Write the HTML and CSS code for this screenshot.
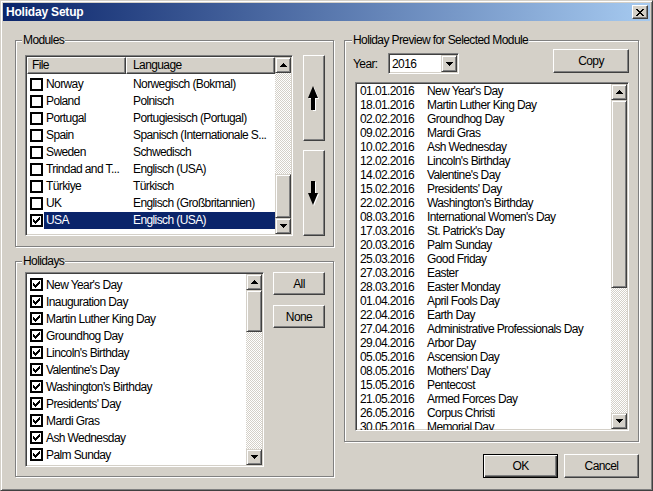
FILE: index.html
```html
<!DOCTYPE html>
<html lang="en">
<head>
    <meta charset="UTF-8">
    <title>Holiday Setup</title>
    <link rel="stylesheet" href="styles.css">
</head>
<body>
<svg class="svg-defs" xmlns="http://www.w3.org/2000/svg">
    <symbol id="chk-off" viewBox="0 0 13 13">
        <rect x="1" y="1" width="11" height="11" fill="#fff" stroke="#000" stroke-width="2"/>
    </symbol>
    <symbol id="chk-on" viewBox="0 0 13 13">
        <rect x="1" y="1" width="11" height="11" fill="#fff" stroke="#000" stroke-width="2"/>
        <path d="M3 5h1v3H3z M4 6h1v3H4z M5 7h1v3H5z M6 6h1v3H6z M7 5h1v3H7z M8 4h1v3H8z M9 3h1v3H9z" fill="#000"/>
    </symbol>
    <symbol id="tri-up" viewBox="0 0 7 4">
        <path d="M3 0h1v1H3z M2 1h3v1H2z M1 2h5v1H1z M0 3h7v1H0z" fill="#000"/>
    </symbol>
    <symbol id="tri-down" viewBox="0 0 7 4">
        <path d="M0 0h7v1H0z M1 1h5v1H1z M2 2h3v1H2z M3 3h1v1H3z" fill="#000"/>
    </symbol>
    <symbol id="big-up" viewBox="0 0 12 25">
        <polygon points="6,1 11,13 8,13 8,25 5,25 5,13 1,13" fill="#fff"/>
        <polygon points="5,0 10,12 7,12 7,24 3,24 3,12 0,12" fill="#000"/>
    </symbol>
    <symbol id="big-down" viewBox="0 0 12 25">
        <polygon points="6,25 11,13 8,13 8,1 5,1 5,13 1,13" fill="#fff"/>
        <polygon points="5,24 10,12 7,12 7,0 3,0 3,12 0,12" fill="#000"/>
    </symbol>
    <symbol id="close-x" viewBox="0 0 8 7">
        <path d="M0 0h2v1H0z M6 0h2v1H6z M1 1h2v1H1z M5 1h2v1H5z M2 2h4v1H2z M3 3h2v1H3z M2 4h4v1H2z M1 5h2v1H1z M5 5h2v1H5z M0 6h2v1H0z M6 6h2v1H6z" fill="#000"/>
    </symbol>
</svg>

<div class="window">
    <div class="caption">
        <span class="caption-text">Holiday Setup</span>
        <div class="close-btn"><svg width="8" height="7"><use href="#close-x"/></svg></div>
    </div>

    <div class="client">
        <div class="col-left">
            <!-- Modules -->
            <div class="group modules">
                <div class="group-title">Modules</div>
                <div class="modules-body">
                    <div class="sunken modules-list">
                        <div class="lv-main">
                            <div class="lv-header">
                                <div class="hd hd-file">File</div>
                                <div class="hd hd-lang">Language</div>
                            </div>
                            <div class="lv-rows">
                                <div class="lv-row"><svg class="chk"><use href="#chk-off"/></svg><span class="c-file">Norway</span><span class="c-lang">Norwegisch (Bokmal)</span></div>
                                <div class="lv-row"><svg class="chk"><use href="#chk-off"/></svg><span class="c-file">Poland</span><span class="c-lang">Polnisch</span></div>
                                <div class="lv-row"><svg class="chk"><use href="#chk-off"/></svg><span class="c-file">Portugal</span><span class="c-lang">Portugiesisch (Portugal)</span></div>
                                <div class="lv-row"><svg class="chk"><use href="#chk-off"/></svg><span class="c-file">Spain</span><span class="c-lang">Spanisch (Internationale S...</span></div>
                                <div class="lv-row"><svg class="chk"><use href="#chk-off"/></svg><span class="c-file">Sweden</span><span class="c-lang">Schwedisch</span></div>
                                <div class="lv-row"><svg class="chk"><use href="#chk-off"/></svg><span class="c-file">Trindad and T...</span><span class="c-lang">Englisch (USA)</span></div>
                                <div class="lv-row"><svg class="chk"><use href="#chk-off"/></svg><span class="c-file">Türkiye</span><span class="c-lang">Türkisch</span></div>
                                <div class="lv-row"><svg class="chk"><use href="#chk-off"/></svg><span class="c-file">UK</span><span class="c-lang">Englisch (Großbritannien)</span></div>
                                <div class="lv-row selected"><svg class="chk"><use href="#chk-on"/></svg><span class="c-file">USA</span><span class="c-lang">Englisch (USA)</span></div>
                            </div>
                        </div>
                        <div class="scrollbar">
                            <div class="sb-btn"><svg width="7" height="4"><use href="#tri-up"/></svg></div>
                            <div class="sb-track"></div>
                            <div class="sb-thumb modules-thumb"></div>
                            <div class="sb-btn"><svg width="7" height="4"><use href="#tri-down"/></svg></div>
                        </div>
                    </div>
                    <div class="move-btns">
                        <div class="btn big"><svg width="12" height="25"><use href="#big-up"/></svg></div>
                        <div class="btn big"><svg width="12" height="25"><use href="#big-down"/></svg></div>
                    </div>
                </div>
            </div>

            <!-- Holidays -->
            <div class="group holidays">
                <div class="group-title">Holidays</div>
                <div class="holidays-body">
                    <div class="sunken holidays-list">
                        <div class="hl-rows">
                            <div class="hl-row"><svg class="chk"><use href="#chk-on"/></svg><span>New Year's Day</span></div>
                            <div class="hl-row"><svg class="chk"><use href="#chk-on"/></svg><span>Inauguration Day</span></div>
                            <div class="hl-row"><svg class="chk"><use href="#chk-on"/></svg><span>Martin Luther King Day</span></div>
                            <div class="hl-row"><svg class="chk"><use href="#chk-on"/></svg><span>Groundhog Day</span></div>
                            <div class="hl-row"><svg class="chk"><use href="#chk-on"/></svg><span>Lincoln's Birthday</span></div>
                            <div class="hl-row"><svg class="chk"><use href="#chk-on"/></svg><span>Valentine's Day</span></div>
                            <div class="hl-row"><svg class="chk"><use href="#chk-on"/></svg><span>Washington's Birthday</span></div>
                            <div class="hl-row"><svg class="chk"><use href="#chk-on"/></svg><span>Presidents' Day</span></div>
                            <div class="hl-row"><svg class="chk"><use href="#chk-on"/></svg><span>Mardi Gras</span></div>
                            <div class="hl-row"><svg class="chk"><use href="#chk-on"/></svg><span>Ash Wednesday</span></div>
                            <div class="hl-row"><svg class="chk"><use href="#chk-on"/></svg><span>Palm Sunday</span></div>
                        </div>
                        <div class="scrollbar">
                            <div class="sb-btn"><svg width="7" height="4"><use href="#tri-up"/></svg></div>
                            <div class="sb-thumb holidays-thumb"></div>
                            <div class="sb-track"></div>
                            <div class="sb-btn"><svg width="7" height="4"><use href="#tri-down"/></svg></div>
                        </div>
                    </div>
                    <div class="select-btns">
                        <div class="btn push">All</div>
                        <div class="btn push">None</div>
                    </div>
                </div>
            </div>
        </div>

        <div class="col-right">
            <!-- Preview -->
            <div class="group preview">
                <div class="group-title">Holiday Preview for Selected Module</div>
                <div class="preview-top">
                    <div class="year-box">
                        <span class="year-label">Year:</span>
                        <div class="sunken combo">
                            <span class="combo-value">2016</span>
                            <div class="sb-btn combo-btn"><svg width="7" height="4"><use href="#tri-down"/></svg></div>
                        </div>
                    </div>
                    <div class="btn push copy-btn">Copy</div>
                </div>
                <div class="sunken preview-list">
                    <div class="pv-rows">
                        <div class="pv-row"><span class="pv-date">01.01.2016</span><span>New Year's Day</span></div>
                        <div class="pv-row"><span class="pv-date">18.01.2016</span><span>Martin Luther King Day</span></div>
                        <div class="pv-row"><span class="pv-date">02.02.2016</span><span>Groundhog Day</span></div>
                        <div class="pv-row"><span class="pv-date">09.02.2016</span><span>Mardi Gras</span></div>
                        <div class="pv-row"><span class="pv-date">10.02.2016</span><span>Ash Wednesday</span></div>
                        <div class="pv-row"><span class="pv-date">12.02.2016</span><span>Lincoln's Birthday</span></div>
                        <div class="pv-row"><span class="pv-date">14.02.2016</span><span>Valentine's Day</span></div>
                        <div class="pv-row"><span class="pv-date">15.02.2016</span><span>Presidents' Day</span></div>
                        <div class="pv-row"><span class="pv-date">22.02.2016</span><span>Washington's Birthday</span></div>
                        <div class="pv-row"><span class="pv-date">08.03.2016</span><span>International Women's Day</span></div>
                        <div class="pv-row"><span class="pv-date">17.03.2016</span><span>St. Patrick's Day</span></div>
                        <div class="pv-row"><span class="pv-date">20.03.2016</span><span>Palm Sunday</span></div>
                        <div class="pv-row"><span class="pv-date">25.03.2016</span><span>Good Friday</span></div>
                        <div class="pv-row"><span class="pv-date">27.03.2016</span><span>Easter</span></div>
                        <div class="pv-row"><span class="pv-date">28.03.2016</span><span>Easter Monday</span></div>
                        <div class="pv-row"><span class="pv-date">01.04.2016</span><span>April Fools Day</span></div>
                        <div class="pv-row"><span class="pv-date">22.04.2016</span><span>Earth Day</span></div>
                        <div class="pv-row"><span class="pv-date">27.04.2016</span><span>Administrative Professionals Day</span></div>
                        <div class="pv-row"><span class="pv-date">29.04.2016</span><span>Arbor Day</span></div>
                        <div class="pv-row"><span class="pv-date">05.05.2016</span><span>Ascension Day</span></div>
                        <div class="pv-row"><span class="pv-date">08.05.2016</span><span>Mothers' Day</span></div>
                        <div class="pv-row"><span class="pv-date">15.05.2016</span><span>Pentecost</span></div>
                        <div class="pv-row"><span class="pv-date">21.05.2016</span><span>Armed Forces Day</span></div>
                        <div class="pv-row"><span class="pv-date">26.05.2016</span><span>Corpus Christi</span></div>
                        <div class="pv-row"><span class="pv-date">30.05.2016</span><span>Memorial Day</span></div>
                    </div>
                    <div class="scrollbar">
                        <div class="sb-btn"><svg width="7" height="4"><use href="#tri-up"/></svg></div>
                        <div class="sb-thumb preview-thumb"></div>
                        <div class="sb-track"></div>
                        <div class="sb-btn"><svg width="7" height="4"><use href="#tri-down"/></svg></div>
                    </div>
                </div>
            </div>

            <div class="dialog-btns">
                <div class="btn push default">OK</div>
                <div class="btn push">Cancel</div>
            </div>
        </div>
    </div>
</div>
</body>
</html>
```

FILE: styles.css
```css
html, body {
    margin: 0;
    height: 100%;
}

body {
    background-color: #d4d0c8;
    font-family: "Liberation Sans", Arial, sans-serif;
    font-size: 12px;
    letter-spacing: -0.6px;
    color: #000;
}

.svg-defs {
    display: block;
    width: 0;
    height: 0;
    overflow: hidden;
}

/* window frame */
.window {
    box-sizing: border-box;
    width: 653px;
    height: 491px;
    padding: 2px;
    border: 1px solid;
    border-color: #d4d0c8 #404040 #404040 #d4d0c8;
    box-shadow: inset 1px 1px #fff, inset -1px -1px #808080;
    background-color: #d4d0c8;
}

.caption {
    height: 18px;
    display: flex;
    align-items: center;
    justify-content: space-between;
    padding: 0 2px 0 3px;
    background: linear-gradient(to right, #0a246a, #a6caf0);
}

.caption-text {
    color: #fff;
    font-weight: bold;
    font-size: 12px;
    letter-spacing: -0.2px;
}

.close-btn {
    box-sizing: border-box;
    width: 16px;
    height: 14px;
    display: flex;
    align-items: center;
    justify-content: center;
    background-color: #d4d0c8;
    border: 1px solid;
    border-color: #fff #404040 #404040 #fff;
    box-shadow: inset -1px -1px #808080;
}

.client {
    display: flex;
    gap: 10px;
    padding: 19px 11px 0 12px;
}

.col-left {
    width: 319px;
    display: flex;
    flex-direction: column;
}

.col-right {
    width: 295px;
    display: flex;
    flex-direction: column;
}

/* etched group box */
.group {
    box-sizing: border-box;
    border: 1px solid #808080;
    box-shadow: inset 1px 1px #fff, 1px 1px #fff;
}

.group-title {
    width: fit-content;
    margin: -8px 0 0 -3px;
    padding: 0 1px;
    line-height: 14px;
    background-color: #d4d0c8;
}

.modules {
    height: 207px;
    padding: 0 8px 0 9px;
}

.modules-body {
    display: flex;
    gap: 10px;
    padding-top: 8px;
}

.holidays {
    height: 216px;
    margin-top: 14px;
    padding: 0 8px 0 9px;
}

.holidays-body {
    display: flex;
    gap: 9px;
    padding-top: 4px;
}

.preview {
    height: 402px;
    padding: 0 9px 0 10px;
}

.preview .group-title {
    margin-left: -3px;
}

/* sunken field */
.sunken {
    box-sizing: border-box;
    display: flex;
    padding: 1px;
    border: 1px solid;
    border-color: #808080 #fff #fff #808080;
    box-shadow: inset 1px 1px #404040, inset -1px -1px #d4d0c8;
    background-color: #fff;
    overflow: hidden;
}

/* raised buttons */
.btn {
    box-sizing: border-box;
    display: flex;
    align-items: center;
    justify-content: center;
    background-color: #d4d0c8;
    border: 1px solid;
    border-color: #fff #404040 #404040 #fff;
    box-shadow: inset -1px -1px #808080;
}

.btn.default {
    border-color: #000;
    box-shadow: inset 1px 1px #fff, inset -1px -1px #404040, inset -2px -2px #808080;
}

.push {
    height: 24px;
}

/* scrollbars */
.scrollbar {
    width: 16px;
    flex-shrink: 0;
    display: flex;
    flex-direction: column;
    background: repeating-conic-gradient(#fff 0 25%, #d4d0c8 0 50%) 0 0 / 2px 2px;
}

.sb-btn,
.sb-thumb {
    box-sizing: border-box;
    flex-shrink: 0;
    background-color: #d4d0c8;
    border: 1px solid;
    border-color: #d4d0c8 #404040 #404040 #d4d0c8;
    box-shadow: inset 1px 1px #fff, inset -1px -1px #808080;
}

.sb-btn {
    width: 16px;
    height: 16px;
    display: flex;
    align-items: center;
    justify-content: center;
}

.sb-btn svg {
    display: block;
}

.sb-track {
    flex: 1;
}

.modules-thumb {
    height: 44px;
}

.holidays-thumb {
    height: 42px;
}

.preview-thumb {
    height: 188px;
}

.chk {
    width: 13px;
    height: 13px;
    flex-shrink: 0;
    display: block;
}

/* modules list view */
.modules-list {
    width: 268px;
    height: 181px;
}

.lv-main {
    flex: 1;
    overflow: hidden;
}

.lv-header {
    display: flex;
    height: 17px;
}

.hd {
    box-sizing: border-box;
    height: 17px;
    line-height: 15px;
    border: 1px solid;
    border-color: #fff #404040 #404040 #fff;
    box-shadow: inset -1px -1px #808080;
    background-color: #d4d0c8;
    white-space: nowrap;
}

.hd-file {
    width: 99px;
    padding-left: 4px;
}

.hd-lang {
    flex: 1;
    padding-left: 6px;
}

.lv-rows {
    padding-top: 2px;
}

.lv-row {
    display: flex;
    align-items: center;
    height: 17px;
    white-space: nowrap;
}

.lv-row .chk {
    margin: 0 1px 0 3px;
}

.c-file {
    width: 82px;
    padding-left: 2px;
    box-sizing: border-box;
    line-height: 17px;
    overflow: hidden;
}

.c-lang {
    flex: 1;
    padding-left: 7px;
    line-height: 17px;
    overflow: hidden;
}

.lv-row.selected .c-file,
.lv-row.selected .c-lang {
    background-color: #0a246a;
    color: #fff;
}

.move-btns {
    width: 22px;
    height: 181px;
    display: flex;
    flex-direction: column;
    gap: 9px;
}

.big {
    flex: 1;
}

/* holidays list */
.holidays-list {
    width: 239px;
    height: 195px;
}

.hl-rows {
    flex: 1;
    padding-top: 2px;
}

.hl-row {
    display: flex;
    align-items: center;
    height: 17px;
    white-space: nowrap;
}

.hl-row .chk {
    margin: 0 3px 0 3px;
}

.select-btns {
    width: 52px;
    display: flex;
    flex-direction: column;
    gap: 10px;
}

.select-btns .push {
    height: 23px;
}

/* preview */
.preview-top {
    display: flex;
    justify-content: space-between;
    align-items: flex-start;
    height: 24px;
    padding-top: 2px;
}

.year-box {
    display: flex;
    align-items: center;
    margin-top: 4px;
}

.year-label {
    width: 35px;
    margin-left: -2px;
}

.combo {
    width: 71px;
    height: 21px;
    align-items: center;
}

.combo-value {
    flex: 1;
    padding-left: 2px;
}

.combo-btn {
    height: 17px;
}

.copy-btn {
    width: 76px;
}

.preview-list {
    height: 349px;
    margin-top: 9px;
}

.pv-rows {
    flex: 1;
}

.pv-row {
    display: flex;
    height: 14px;
    line-height: 14px;
    white-space: nowrap;
}

.pv-date {
    width: 67px;
    padding-left: 3px;
    flex-shrink: 0;
}

.dialog-btns {
    display: flex;
    justify-content: flex-end;
    gap: 6px;
    margin-top: 12px;
}

.dialog-btns .push {
    width: 75px;
}
```
